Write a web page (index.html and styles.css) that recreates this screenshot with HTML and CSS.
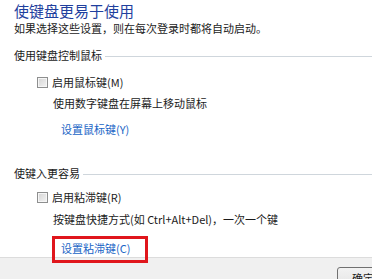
FILE: index.html
```html
<!DOCTYPE html>
<html lang="zh-CN">
<head>
<meta charset="utf-8">
<title>使键盘更易于使用</title>
<link rel="stylesheet" href="styles.css">
</head>
<body>
<div class="page">
  <h1 class="title">使键盘更易于使用</h1>
  <p class="subtitle">如果选择这些设置，则在每次登录时都将自动启动。</p>

  <div class="group-head group-head-first">使用键盘控制鼠标</div>
  <div class="check-row check-row-first"><span class="checkbox"></span><span class="check-label">启用鼠标键(M)</span></div>
  <p class="desc desc-first">使用数字键盘在屏幕上移动鼠标</p>
  <div class="link-row link-row-first"><a class="link">设置鼠标键(Y)</a></div>

  <div class="group-head group-head-second">使键入更容易</div>
  <div class="check-row check-row-second"><span class="checkbox"></span><span class="check-label">启用粘滞键(R)</span></div>
  <p class="desc desc-second">按键盘快捷方式(如 Ctrl+Alt+Del)，一次一个键</p>
  <div class="link-row link-row-second"><a class="link">设置粘滞键(C)</a><span class="highlight"></span></div>
</div>
<div class="footer">
  <span class="button">确定</span>
</div>
</body>
</html>
```
FILE: styles.css
```css
html, body {
  margin: 0;
  padding: 0;
  background: #ffffff;
  overflow: hidden;
}
body {
  width: 372px;
  height: 279px;
  font-family: "Noto Sans CJK SC", "Noto Sans", sans-serif;
  font-size: 11px;
  color: #1b1b1b;
}
.page {
  padding: 1px 0 0 14px;
}
.title {
  margin: 0;
  font-size: 15px;
  font-weight: normal;
  line-height: 20px;
  color: #1f3f9e;
}
.subtitle {
  margin: 0;
  line-height: 14px;
}
.group-head {
  display: flex;
  align-items: center;
  line-height: 14px;
}
.group-head::after {
  content: "";
  flex: 1;
  height: 1px;
  margin-left: 3px;
  margin-top: 2px;
  background: #cfd6dc;
}
.group-head-first { margin-top: 13px; }
.group-head-second { margin-top: 30px; }
.check-row {
  display: flex;
  align-items: center;
  height: 14px;
  margin-left: 23px;
}
.check-row-first { margin-top: 13px; }
.check-row-second { margin-top: 10px; }
.checkbox {
  box-sizing: border-box;
  width: 11px;
  height: 11px;
  border: 1px solid #8e8f8f;
  background: linear-gradient(135deg, #d4d4d4, #f4f4f4);
  box-shadow: inset 0 0 0 1px #f6f6f6;
}
.check-label {
  margin-left: 4px;
}
.desc {
  margin: 0 0 0 39px;
  line-height: 14px;
}
.desc-first { margin-top: 7px; }
.desc-second { margin-top: 8px; }
.link-row {
  position: relative;
  margin-left: 47px;
  line-height: 14px;
}
.link-row-first { margin-top: 12px; }
.link-row-second { margin-top: 15px; z-index: 2; }
.link {
  color: #2165c6;
  text-decoration: none;
}
.highlight {
  position: absolute;
  left: -9px;
  top: -5px;
  width: 96px;
  height: 27px;
  box-sizing: border-box;
  border: 3px solid #e0161c;
}
.footer {
  position: relative;
  margin-top: 2px;
  height: 22px;
  box-sizing: border-box;
  border-top: 1px solid #dcdcdc;
  background: #f0f0f0;
  display: flex;
  justify-content: flex-end;
  padding-top: 9px;
  overflow: hidden;
}
.button {
  flex: none;
  box-sizing: border-box;
  width: 75px;
  height: 23px;
  margin-right: -40px;
  border: 1px solid #707070;
  border-radius: 3px;
  background: linear-gradient(#f2f2f2, #e3e3e3);
  padding-left: 14px;
  line-height: 20px;
  color: #1b1b1b;
}
```
